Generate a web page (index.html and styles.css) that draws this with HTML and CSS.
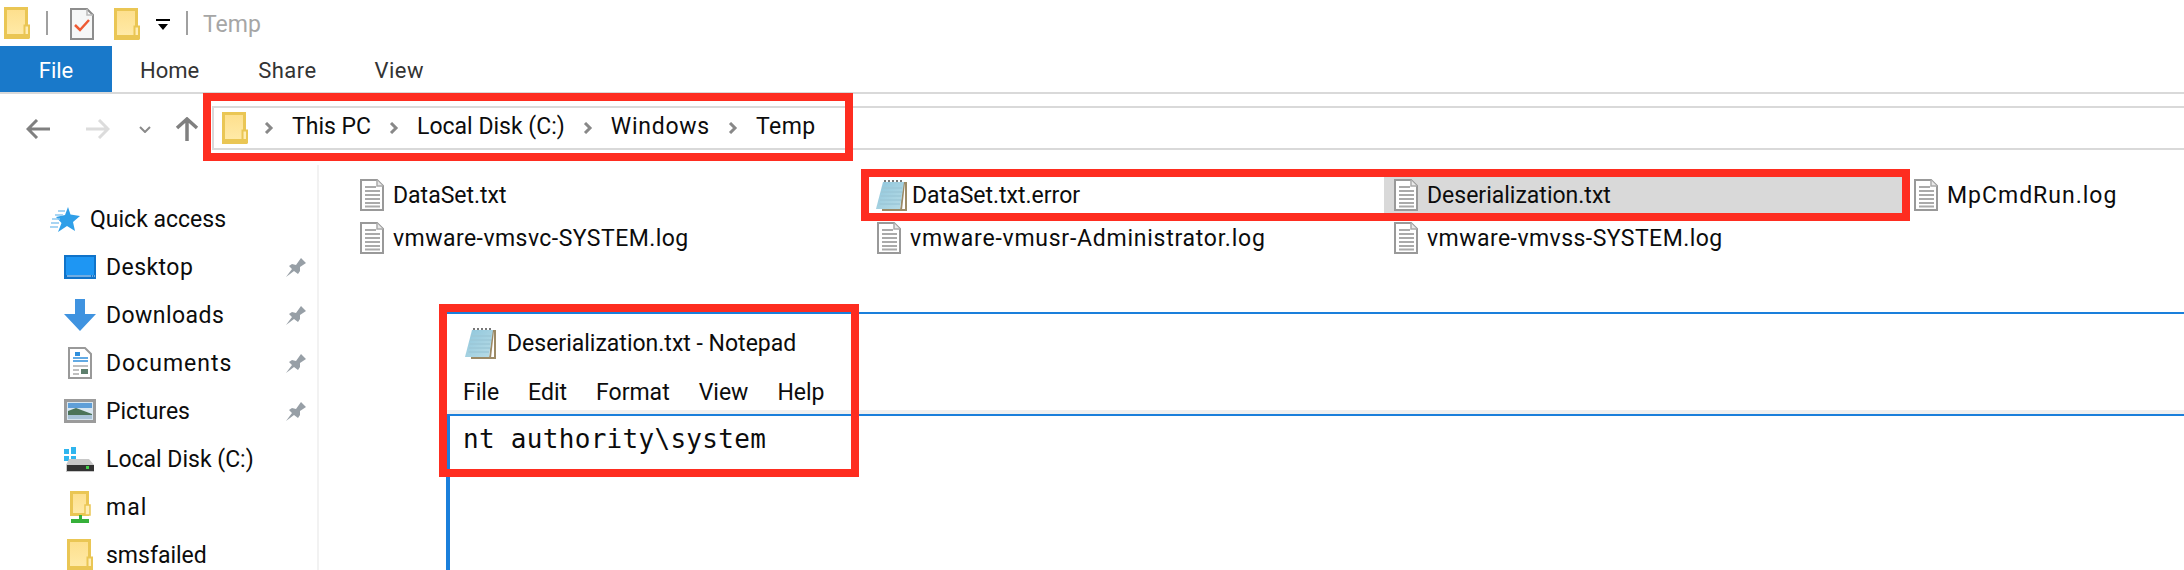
FILE: index.html
```html
<!DOCTYPE html>
<html lang="en">
<head>
<meta charset="utf-8">
<title>Temp</title>
<link rel="stylesheet" href="styles.css">
</head>
<body>
<svg class="defs" width="0" height="0" aria-hidden="true">
  <defs>
    <linearGradient id="fold" x1="0" y1="0" x2="0" y2="1"><stop offset="0" stop-color="#fddf8c"/><stop offset="1" stop-color="#ffeaa8"/></linearGradient>
    <linearGradient id="pad" x1="0" y1="0" x2="1" y2="1"><stop offset="0" stop-color="#8fc6dc"/><stop offset="1" stop-color="#b8dce6"/></linearGradient>
    <symbol id="i-folder" viewBox="0 0 26 32">
      <path d="M1.500 1.500H22.500V28.500H1.500Z" fill="url(#fold)" stroke="#eac654" stroke-width="3"/>
      <path d="M20.500 18.500H25V30.500H20.500Z" fill="#ffedb5" stroke="#eac654" stroke-width="2"/>
      <path d="M0 27H25V32H0Z" fill="#eac654"/>
    </symbol>
    <symbol id="i-txt" viewBox="0 0 24 32">
      <path d="M1 1H17L23 7V31H1Z" fill="#fff" stroke="#999" stroke-width="2"/>
      <path d="M17 1V7H23" fill="#e8e8e8" stroke="#aaa" stroke-width="1.500"/>
      <path d="M5 8H16M5 12H20M5 16H20M5 20H20M5 24H20M5 27.500H20" stroke="#aaa" stroke-width="2"/>
    </symbol>
    <symbol id="i-notepad" viewBox="0 0 31 32">
      <path d="M6 31H30V4H28L25 31" fill="#fff" stroke="#9c8a66" stroke-width="2"/>
      <path d="M7 3H28L24 30H0Z" fill="url(#pad)"/>
      <path d="M6 9H26M5 13H26M4.500 17H25M4 21H25M3.500 25H24" stroke="#9cc8d8" stroke-width="1.500"/>
      <path d="M8 2H28" stroke="#777" stroke-width="2" stroke-dasharray="2 2"/>
    </symbol>
    <symbol id="i-pin" viewBox="0 0 20 20">
      <path d="M0 20L6 12L3 9L6 7L10 8L15 1L20 6L14 10L14 14L12 17L8 14Z" fill="#979fa6"/>
    </symbol>
  </defs>
</svg>
<div class="page">
  <header class="titlebar">
    <svg class="ic-folder qa-first"><use href="#i-folder"/></svg>
    <span class="tsep"></span>
    <svg class="ic-check" viewBox="0 0 24 32">
      <path d="M1 1H17L23 7V31H1Z" fill="#f6f7f7" stroke="#8d8d8d" stroke-width="2"/>
      <path d="M17 1V7H23" fill="none" stroke="#bbb" stroke-width="1.500"/>
      <path d="M5 17L10 22L19 12" fill="none" stroke="#ee5a33" stroke-width="2.500"/>
    </svg>
    <svg class="ic-folder qa-second"><use href="#i-folder"/></svg>
    <svg class="ic-drop" viewBox="0 0 14 12"><path d="M0 0H14V2H0ZM2 5H12L7 11Z" fill="#000"/></svg>
    <span class="tsep tsep-b"></span>
    <span class="wintitle">Temp</span>
  </header>
  <nav class="tabs">
    <span class="tab tab-file">File</span>
    <span class="tab tab-home">Home</span>
    <span class="tab tab-share sp-s">Share</span>
    <span class="tab tab-view sp-s">View</span>
  </nav>
  <div class="navrow">
    <svg class="nav-back" viewBox="0 0 24 20"><path d="M11 1L2 10L11 19M2 10H24" fill="none" stroke="#808080" stroke-width="3"/></svg>
    <svg class="nav-fwd" viewBox="0 0 24 20"><path d="M13 1L22 10L13 19M22 10H0" fill="none" stroke="#dcdcdc" stroke-width="3"/></svg>
    <svg class="nav-down" viewBox="0 0 12 7"><path d="M1 1L6 6L11 1" fill="none" stroke="#8a8a8a" stroke-width="2"/></svg>
    <svg class="nav-up" viewBox="0 0 24 24"><path d="M2 11L12 2L22 11M12 2V24" fill="none" stroke="#808080" stroke-width="3.500"/></svg>
    <div class="address">
      <svg class="ic-folder"><use href="#i-folder"/></svg>
      <svg class="chev chev-first" viewBox="0 0 10 12"><path d="M2 1L7 6L2 11" fill="none" stroke="#888" stroke-width="3"/></svg>
      <span class="crumb">This PC</span>
      <svg class="chev" viewBox="0 0 10 12"><path d="M2 1L7 6L2 11" fill="none" stroke="#888" stroke-width="3"/></svg>
      <span class="crumb">Local Disk (C:)</span>
      <svg class="chev" viewBox="0 0 10 12"><path d="M2 1L7 6L2 11" fill="none" stroke="#888" stroke-width="3"/></svg>
      <span class="crumb sp-m">Windows</span>
      <svg class="chev" viewBox="0 0 10 12"><path d="M2 1L7 6L2 11" fill="none" stroke="#888" stroke-width="3"/></svg>
      <span class="crumb sp-s">Temp</span>
    </div>
  </div>
  <main class="main">
    <aside class="sidebar">
      <div class="side-row side-qa">
        <svg class="ic-star" viewBox="0 0 30 26">
          <path d="M18 1L20.500 8.500L30 10L23 16L25 25L17 20L8 26L11.500 17L6 11L15 9Z" fill="#2f9fe8"/>
          <path d="M0 21H8M1 17H9M2 13H10M5 9H13M8 5H15" stroke="#8cc8f0" stroke-width="1.500"/>
        </svg>
        <span>Quick access</span>
      </div>
      <div class="side-row">
        <span class="side-icon"><svg viewBox="0 0 32 24" class="ic-desk"><rect width="32" height="24" fill="#1073c9"/><rect x="2" y="2" width="28" height="18" fill="#1e96f3"/><path d="M3 21H27M28 21H29M30 21H31" stroke="#cfe6fa" stroke-width="1"/></svg></span>
        <span class="side-label sp-s">Desktop</span>
        <svg class="ic-pin"><use href="#i-pin"/></svg>
      </div>
      <div class="side-row">
        <span class="side-icon"><svg viewBox="0 0 32 32" class="ic-dl"><path d="M11 0H21V15H32L16 32L0 15H11Z" fill="#3f93e0"/></svg></span>
        <span class="side-label sp-s">Downloads</span>
        <svg class="ic-pin"><use href="#i-pin"/></svg>
      </div>
      <div class="side-row">
        <span class="side-icon"><svg viewBox="0 0 24 32" class="ic-doc"><path d="M1 1H17L23 7V31H1Z" fill="#fff" stroke="#999" stroke-width="2"/><path d="M7 5H12V9H7Z" fill="#2f8fdc"/><path d="M5 11H20M5 14H20" stroke="#2f8fdc" stroke-width="1.500"/><path d="M5 19H20M5 23H11M5 27H11" stroke="#aaa" stroke-width="1.500"/><path d="M13 22H20V27H13Z" fill="#5d7f6d"/></svg></span>
        <span class="side-label sp-l">Documents</span>
        <svg class="ic-pin"><use href="#i-pin"/></svg>
      </div>
      <div class="side-row">
        <span class="side-icon"><svg viewBox="0 0 32 24" class="ic-pic"><rect x="1.500" y="1.500" width="29" height="21" fill="#d8e6f0" stroke="#9b9b9b" stroke-width="3"/><rect x="4" y="4" width="24" height="5" fill="#5f9fd8"/><path d="M4 12L12 9L28 15V16H4Z" fill="#4c7358"/><rect x="4" y="16" width="24" height="4" fill="#a9c3d8"/></svg></span>
        <span class="side-label">Pictures</span>
        <svg class="ic-pin"><use href="#i-pin"/></svg>
      </div>
      <div class="side-row">
        <span class="side-icon"><svg viewBox="0 0 32 26" class="ic-disk"><path d="M0 3H5V8H0ZM7 1H12V8H7ZM0 10H5V15H0ZM7 10H12V15H7Z" fill="#2fb5ee"/><path d="M5 13H25L30 19V26H2V19Z" fill="#c8c8c8"/><rect x="3" y="19" width="27" height="6" fill="#333"/><rect x="22" y="20" width="3" height="3" fill="#43d04a"/></svg></span>
        <span class="side-label">Local Disk (C:)</span>
      </div>
      <div class="side-row">
        <span class="side-icon"><svg viewBox="0 0 21 32" class="ic-mal"><path d="M1.500 1.500H17.500V23.500H1.500Z" fill="url(#fold)" stroke="#eac654" stroke-width="3"/><path d="M15 14H20V24H15Z" fill="#ffedb5" stroke="#eac654" stroke-width="1.500"/><path d="M9 24H12V28H19V32H1V28H9Z" fill="#36b03a"/></svg></span>
        <span class="side-label sp-l">mal</span>
      </div>
      <div class="side-row">
        <span class="side-icon"><svg class="ic-folder"><use href="#i-folder"/></svg></span>
        <span class="side-label">smsfailed</span>
      </div>
    </aside>
    <section class="content">
      <div class="files">
        <div class="file"><svg class="ic-txt"><use href="#i-txt"/></svg><span>DataSet.txt</span></div>
        <div class="file file-note"><svg class="ic-notepad"><use href="#i-notepad"/></svg><span>DataSet.txt.error</span></div>
        <div class="file file-sel"><svg class="ic-txt"><use href="#i-txt"/></svg><span>Deserialization.txt</span></div>
        <div class="file"><svg class="ic-txt"><use href="#i-txt"/></svg><span class="sp-l">MpCmdRun.log</span></div>
        <div class="file"><svg class="ic-txt"><use href="#i-txt"/></svg><span class="sp-s">vmware-vmsvc-SYSTEM.log</span></div>
        <div class="file"><svg class="ic-txt"><use href="#i-txt"/></svg><span class="sp-m">vmware-vmusr-Administrator.log</span></div>
        <div class="file"><svg class="ic-txt"><use href="#i-txt"/></svg><span class="sp-s">vmware-vmvss-SYSTEM.log</span></div>
      </div>
      <div class="notepad">
        <div class="np-title"><svg class="ic-notepad"><use href="#i-notepad"/></svg><span>Deserialization.txt - Notepad</span></div>
        <div class="np-menu"><span>File</span><span>Edit</span><span>Format</span><span>View</span><span>Help</span></div>
        <div class="np-text">nt authority\system</div>
      </div>
    </section>
  </main>
  <div class="mark mark-address"></div>
  <div class="mark mark-files"></div>
  <div class="mark mark-notepad"></div>
</div>
</body>
</html>
```
FILE: styles.css
```css
* { box-sizing: border-box; }
html, body { margin: 0; padding: 0; background: #fff; }
body { width: 2184px; height: 570px; overflow: hidden; font-family: Roboto, "Noto Sans", sans-serif; font-size: 23px; color: #0c0c0c; }
svg { display: block; flex: none; }
.defs { position: absolute; }
.page { position: relative; width: 2184px; height: 570px; overflow: hidden; }

.sp-s { letter-spacing: .45px; }
.sp-m { letter-spacing: .75px; }
.sp-l { letter-spacing: 1px; }

.ic-folder { width: 26px; height: 32px; }
.ic-txt { width: 24px; height: 32px; }
.ic-notepad { width: 31px; height: 32px; }

.titlebar { display: flex; align-items: center; height: 46px; padding-left: 4px; }
.qa-first { margin-top: 0; }
.tsep { width: 2px; height: 24px; background: #a0a0a0; margin-left: 16px; }
.ic-check { width: 24px; height: 32px; margin-left: 22px; margin-top: 2px; }
.qa-second { margin-left: 20px; margin-top: 2px; }
.ic-drop { width: 14px; height: 12px; margin-left: 16px; margin-top: 4px; }
.tsep-b { margin-left: 16px; }
.wintitle { margin-left: 15px; margin-top: 2px; color: #a6a6a6; font-size: 23px; }

.tabs { display: flex; height: 48px; border-bottom: 2px solid #d9d9d9; align-items: stretch; }
.tab { display: flex; align-items: center; padding-top: 2px; font-size: 22px; color: #333; }
.tab-file { width: 112px; justify-content: center; background: #1979ca; color: #fff; }
.tab-home { margin-left: 28px; }
.tab-share { margin-left: 59px; }
.tab-view { margin-left: 58px; }

.navrow { display: flex; align-items: center; height: 71px; padding-left: 26px; }
.nav-back { width: 24px; height: 20px; margin-top: -2px; }
.nav-fwd { width: 24px; height: 20px; margin-left: 36px; margin-top: -2px; }
.nav-down { width: 12px; height: 7px; margin-left: 29px; }
.nav-up { width: 24px; height: 24px; margin-left: 24px; margin-top: -2px; }
.address { display: flex; align-items: center; flex: 1; height: 44px; margin-left: 13px; margin-top: -3px; padding-left: 8px; border: solid #d9d9d9; border-width: 2px 0 2px 2px; }
.chev { width: 10px; height: 12px; margin: 0 18px; }
.chev-first { margin-left: 16px; }
.crumb { color: #0c0c0c; line-height: 1; margin-bottom: 3px; }

.main { display: flex; height: 405px; }
.sidebar { width: 319px; flex: none; border-right: 2px solid #f2f2f2; padding-top: 30px; }
.side-row { display: flex; align-items: center; height: 48px; padding-left: 64px; }
.side-qa { padding-left: 50px; gap: 10px; }
.ic-star { width: 30px; height: 26px; }
.side-icon { width: 32px; height: 32px; display: flex; align-items: center; justify-content: center; flex: none; }
.side-label { margin-left: 10px; flex: 1; }
.ic-desk { width: 32px; height: 24px; }
.ic-dl { width: 32px; height: 32px; }
.ic-doc { width: 24px; height: 32px; }
.ic-pic { width: 32px; height: 24px; }
.ic-disk { width: 32px; height: 26px; }
.ic-mal { width: 21px; height: 32px; }
.ic-pin { width: 20px; height: 20px; margin-right: 11px; }

.content { flex: 1; padding: 12px 0 0 31px; min-width: 0; }
.files { display: grid; grid-template-columns: 517px 517px 520px 1fr; grid-auto-rows: 36px; row-gap: 7px; }
.file { display: flex; align-items: center; padding-left: 10px; gap: 9px; white-space: nowrap; }
.file-note { padding-left: 9px; gap: 5px; }
.file-sel { background: #d9d9d9; margin-right: 1px; }

.notepad { margin: 56px 0 0 96px; height: 258px; border-top: 2px solid #1a7fdb; }
.np-title { display: flex; align-items: center; height: 58px; padding-left: 19px; gap: 11px; }
.np-menu { display: flex; align-items: center; gap: 29px; height: 42px; padding: 2px 0 0 17px; border-bottom: 4px solid #f0f0f0; }
.np-text { height: 156px; border-top: 2px solid #1a7fdb; border-left: 4px solid #1a7fdb; padding: 7px 0 0 13px; font-family: "DejaVu Sans Mono", monospace; font-size: 26px; letter-spacing: .3px; line-height: 32px; }

.mark { position: absolute; border: 8px solid #fe2d20; pointer-events: none; }
.mark-address { left: 203px; top: 93px; width: 650px; height: 68px; }
.mark-files { left: 861px; top: 169px; width: 1049px; height: 52px; }
.mark-notepad { left: 439px; top: 304px; width: 420px; height: 173px; }
```
